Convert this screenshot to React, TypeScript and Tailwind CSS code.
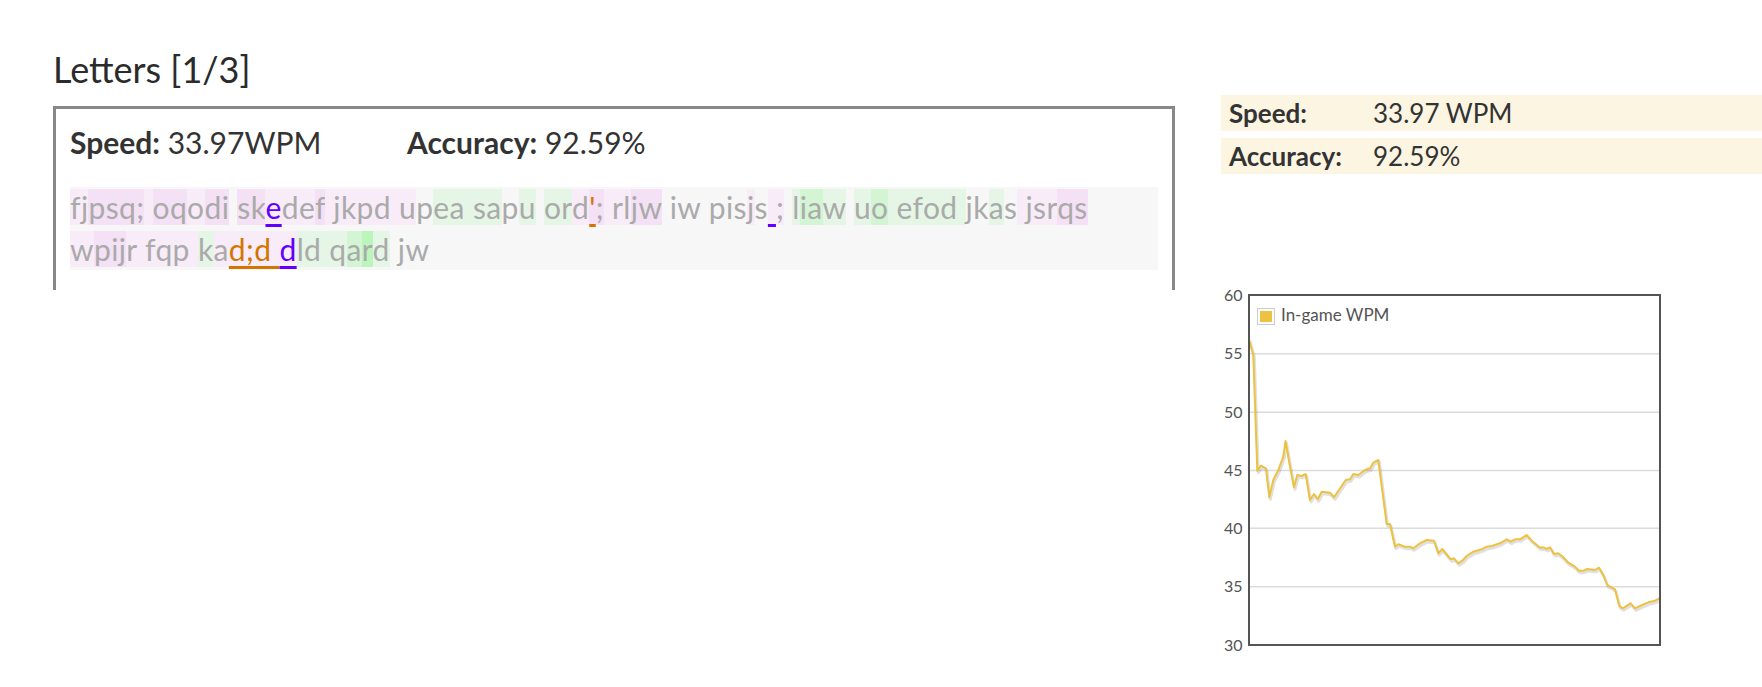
import React from "react";

type Seg = [string, string, ("err" | "cur")?];

const bgs: Record<string, string> = {
  n: "",
  p1: "bg-[#f9ecf9]",
  p2: "bg-[#f5e1f5]",
  g1: "bg-[#e6f6e6]",
  g2: "bg-[#d3f5d3]",
  g3: "bg-[#bcf5bc]",
};

const marks = {
  err: "text-[#d47500] underline decoration-[3px] underline-offset-[5px] [text-decoration-skip-ink:none]",
  cur: "text-[#6200ff] underline decoration-[3px] underline-offset-[5px] [text-decoration-skip-ink:none]",
};

const line1: Seg[] = [
  ["fj", "p1"], ["psq;", "p2"], [" ", "p1"], ["oq", "p2"], ["o", "p1"], ["di", "p2"], [" ", "n"],
  ["sk", "p2"], ["e", "p1", "cur"], ["de", "p1"], ["f", "p2"], [" jkpd u", "p1"], ["p", "n"],
  ["ea sa", "g1"], ["p", "n"], ["u", "g1"], [" ", "n"], ["or", "g1"], ["d", "p1"],
  ["'", "p2", "err"], [";", "p2"], [" rl", "p1"], ["jw", "p2"], [" iw pis", "n"], ["j", "p1"],
  ["s", "n"], [" ", "p1", "cur"], [";", "p1"], [" ", "n"], ["l", "g1"], ["ia", "g2"], ["w", "g1"],
  [" ", "n"], ["u", "g1"], ["o", "g2"], [" efod", "g1"], [" ", "g1"], ["jk", "n"], ["a", "g1"],
  ["s", "n"], [" jsr", "p1"], ["qs", "p2"],
];

const line2: Seg[] = [
  ["w", "p1"], ["pij", "p2"], ["r fqp ", "p1"], ["k", "g1"], ["a", "p1"], ["d;d ", "p1", "err"],
  ["d", "p1", "cur"], ["ld ", "g1"], ["q", "g1"], ["a", "g2"], ["r", "g3"], ["d", "g1"], [" jw", "n"],
];

const wpm: [number, number][] = [
  [28, 54.3], [32.3, 70], [36.3, 185.7], [40, 180.7], [45, 183.3], [48.3, 212.3], [52.3, 195],
  [57.3, 185], [62.3, 171.7], [64.5, 156], [69, 181.7], [73, 202.3], [76.3, 190], [80.7, 191],
  [84.7, 189], [89, 215], [93, 209], [96.7, 214.3], [100.7, 206.7], [109, 207.7], [113, 212.3],
  [124.7, 195], [129, 194.3], [132.3, 189], [137.3, 190], [144, 185], [149, 183.3], [152.3, 177.7],
  [157.3, 175], [165.7, 239], [169, 239], [174, 261.7], [177.3, 259.3], [184, 261.7], [189, 261.7],
  [192.3, 263.3], [199, 258.3], [205.7, 255], [213, 255.7], [217.3, 268.3], [221.3, 264],
  [229.7, 274.3], [233, 273.3], [237.3, 278.3], [241.3, 275.7], [245.7, 271], [252.3, 266.7],
  [260.7, 264.3], [265.7, 261.7], [270.7, 261], [279, 258.3], [285.7, 254.3], [289.7, 256.7],
  [294, 254.3], [299, 254.3], [305.7, 250], [310.7, 255.7], [319, 262.7], [322.3, 262.3],
  [325.7, 264], [329, 262.3], [333, 269], [337.3, 268.3], [341.7, 271.7], [347.3, 277.7],
  [354, 281.7], [358, 285.7], [362.3, 285.7], [366.3, 284], [374, 285], [378, 282.7], [382.3, 290],
  [386.3, 300], [394, 304.3], [398.3, 321], [401.7, 323.3], [409.7, 318.3], [414, 323.3],
  [419, 321], [427.3, 317.3], [434, 315.7], [438.3, 313.3],
];

const ticks = [
  { v: "60", y: 10 },
  { v: "55", y: 68.7 },
  { v: "50", y: 127.3 },
  { v: "45", y: 185.5 },
  { v: "40", y: 243.3 },
  { v: "35", y: 301.7 },
  { v: "30", y: 360 },
];

const WpmChart = () => {
  const pts = wpm.map(([x, y]) => `${x},${y}`).join(" ");
  return (
    <svg width="450" height="380" viewBox="0 0 450 380" className="block">
      {ticks.slice(1, -1).map((t) => (
        <line key={t.v} x1="28" x2="439" y1={t.y} y2={t.y} stroke="#dcdcdc" strokeWidth="1.5" />
      ))}
      {ticks.map((t) => (
        <text
          key={t.v}
          x="21.5"
          y={t.y + 1.5}
          textAnchor="end"
          dominantBaseline="middle"
          fontSize="16"
          fill="#545454"
          fontFamily="Lato, sans-serif"
        >
          {t.v}
        </text>
      ))}
      <polyline
        points={pts}
        fill="none"
        stroke="rgba(0,0,0,0.12)"
        strokeWidth="3"
        strokeLinejoin="round"
        transform="translate(1 2)"
      />
      <polyline points={pts} fill="none" stroke="#edc240" strokeWidth="2" strokeLinejoin="round" />
      <rect x="28" y="10" width="411" height="350" fill="none" stroke="#545454" strokeWidth="2" />
      <rect x="36.5" y="23.5" width="17" height="16" fill="#fff" stroke="#ccc" strokeWidth="1" />
      <rect x="39" y="26" width="12" height="11" fill="#edc240" />
      <text x="60" y="32" dominantBaseline="middle" fontSize="17" fill="#545454" fontFamily="Lato, sans-serif">
        In-game WPM
      </text>
    </svg>
  );
};

const StatRow = ({ label, value }: { label: string; value: string }) => (
  <div className="flex items-center h-[36px] bg-[#fcf5e2] pl-2">
    <span className="w-[144px] font-bold">{label}</span>
    <span>{value}</span>
  </div>
);

const Typed = ({ segs }: { segs: Seg[] }) => (
  <>
    {segs.map(([t, bg, m], i) => (
      <span key={i} className={`${bgs[bg]} ${m ? marks[m] : ""}`}>
        {t}
      </span>
    ))}
  </>
);

export default function App() {
  return (
    <div className="flex items-start w-[1762px] h-[687px] bg-white overflow-hidden text-[#333] font-['Lato','Noto_Sans',sans-serif]">
      <div className="ml-[53px] w-[1122px] pt-[47px]">
        <h1 className="text-[36px] leading-[44px] text-[#2b2b2b]">Letters [1/3]</h1>
        <div className="mt-[15px] h-[184px] border-t-[3px] border-x-[3px] border-[#888] px-[14px] pt-[13px]">
          <div className="flex text-[30px] leading-[40px]">
            <div className="w-[337px]">
              <span className="font-bold">Speed:</span> 33.97WPM
            </div>
            <div>
              <span className="font-bold">Accuracy:</span> 92.59%
            </div>
          </div>
          <p className="mt-[25px] bg-[#f7f7f7] text-[30px] leading-[41.5px] tracking-[0.38px] text-[#aaa]">
            <Typed segs={line1} />
            <br />
            <Typed segs={line2} />
          </p>
        </div>
      </div>
      <div className="ml-[46px] flex-1 pt-[95px]">
        <div className="flex flex-col gap-[7px] text-[26px]">
          <StatRow label="Speed:" value="33.97 WPM" />
          <StatRow label="Accuracy:" value="92.59%" />
        </div>
        <div className="mt-[111px]">
          <WpmChart />
        </div>
      </div>
    </div>
  );
}
